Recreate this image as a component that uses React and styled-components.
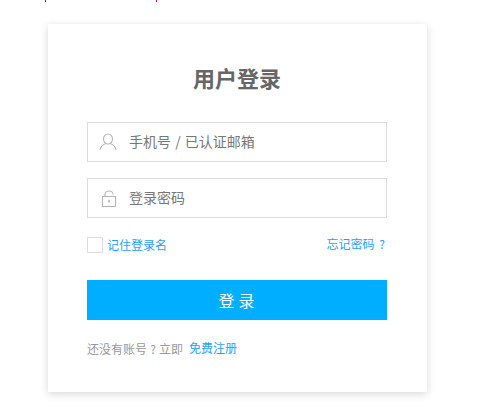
import React from 'react';
import styled, { createGlobalStyle } from 'styled-components';

const GlobalStyle = createGlobalStyle`
  html, body {
    margin: 0;
    padding: 0;
    background: #fff;
  }
  body {
    font-family: "Noto Sans CJK SC", "Noto Sans", sans-serif;
  }
`;

const Page = styled.div`
  position: relative;
  width: 500px;
  height: 417px;
  padding: 24px 0 0 48px;
  box-sizing: border-box;
  overflow: hidden;
`;

const StrayDot = styled.span`
  position: absolute;
  top: 0;
  left: ${(props) => props.left}px;
  width: 1px;
  height: 2px;
  background: ${(props) => props.color};
`;

const Card = styled.div`
  width: 379px;
  height: 368px;
  box-sizing: border-box;
  padding: 36px 40px 0 39px;
  background: #fff;
  box-shadow: 0 2px 8px rgba(0, 0, 0, 0.16);
`;

const Title = styled.h1`
  margin: 0 0 28px;
  height: 34px;
  font-size: 22px;
  line-height: 34px;
  font-weight: 700;
  color: #666;
  text-align: center;
`;

const Field = styled.div`
  display: flex;
  align-items: center;
  width: 300px;
  height: 40px;
  box-sizing: border-box;
  margin-bottom: 16px;
  padding-left: 11px;
  border: 1px solid #ddd;
`;

const FieldIcon = styled.svg`
  width: 18px;
  height: 20px;
  margin-right: 12px;
  flex: none;
  fill: none;
  stroke: #b4b4b4;
  stroke-width: 1.1;
`;

const FieldText = styled.span`
  padding-bottom: 2px;
  font-size: 14px;
  line-height: 20px;
  word-spacing: 1px;
  color: #777;
`;

const OptionsRow = styled.div`
  display: flex;
  justify-content: space-between;
  align-items: flex-start;
  width: 300px;
  height: 27px;
  margin-top: 19px;
`;

const Remember = styled.label`
  display: flex;
  align-items: center;
  gap: 4px;
`;

const Checkbox = styled.span`
  width: 16px;
  height: 16px;
  box-sizing: border-box;
  border: 1px solid #ddd;
`;

const LinkText = styled.a`
  font-size: 12px;
  line-height: 16px;
  color: #1e9fff;
`;

const ForgotLink = styled(LinkText)`
  margin-top: -1px;
  margin-right: 2px;
  word-spacing: 2px;
`;

const SubmitButton = styled.button`
  display: block;
  width: 300px;
  height: 40px;
  margin: 16px 0 0;
  padding: 0 0 0 3px;
  border: none;
  background: #00aeff;
  color: #fff;
  font-family: inherit;
  font-size: 16px;
  letter-spacing: 4px;
  cursor: pointer;
`;

const Footer = styled.p`
  display: flex;
  gap: 6px;
  margin: 20px 0 0;
  font-size: 12px;
  line-height: 18px;
  word-spacing: 0.5px;
  color: #999;
`;

function App() {
  return (
    <Page>
      <GlobalStyle />
      <StrayDot left={45} color="#3a3ad0" />
      <StrayDot left={156} color="#a000a0" />
      <Card>
        <Title>用户登录</Title>
        <Field>
          <FieldIcon viewBox="0 0 18 20">
            <ellipse cx="9" cy="7" rx="4.5" ry="5" />
            <path d="M1 18c.6-3.6 3.4-5.6 5.4-6.2M17 18c-.6-3.6-3.4-5.6-5.4-6.2" />
          </FieldIcon>
          <FieldText>手机号 / 已认证邮箱</FieldText>
        </Field>
        <Field>
          <FieldIcon viewBox="0 0 18 20">
            <rect x="3.5" y="8.5" width="13" height="10" />
            <path d="M6 8.5V6.5a4 3.5 0 0 1 8 0" />
            <path d="M10 12v2.5" strokeWidth="1.6" />
          </FieldIcon>
          <FieldText>登录密码</FieldText>
        </Field>
        <OptionsRow>
          <Remember>
            <Checkbox />
            <LinkText>记住登录名</LinkText>
          </Remember>
          <ForgotLink>忘记密码 ?</ForgotLink>
        </OptionsRow>
        <SubmitButton>登录</SubmitButton>
        <Footer>
          <span>还没有账号 ? 立即</span>
          <LinkText>免费注册</LinkText>
        </Footer>
      </Card>
    </Page>
  );
}

export default App;
